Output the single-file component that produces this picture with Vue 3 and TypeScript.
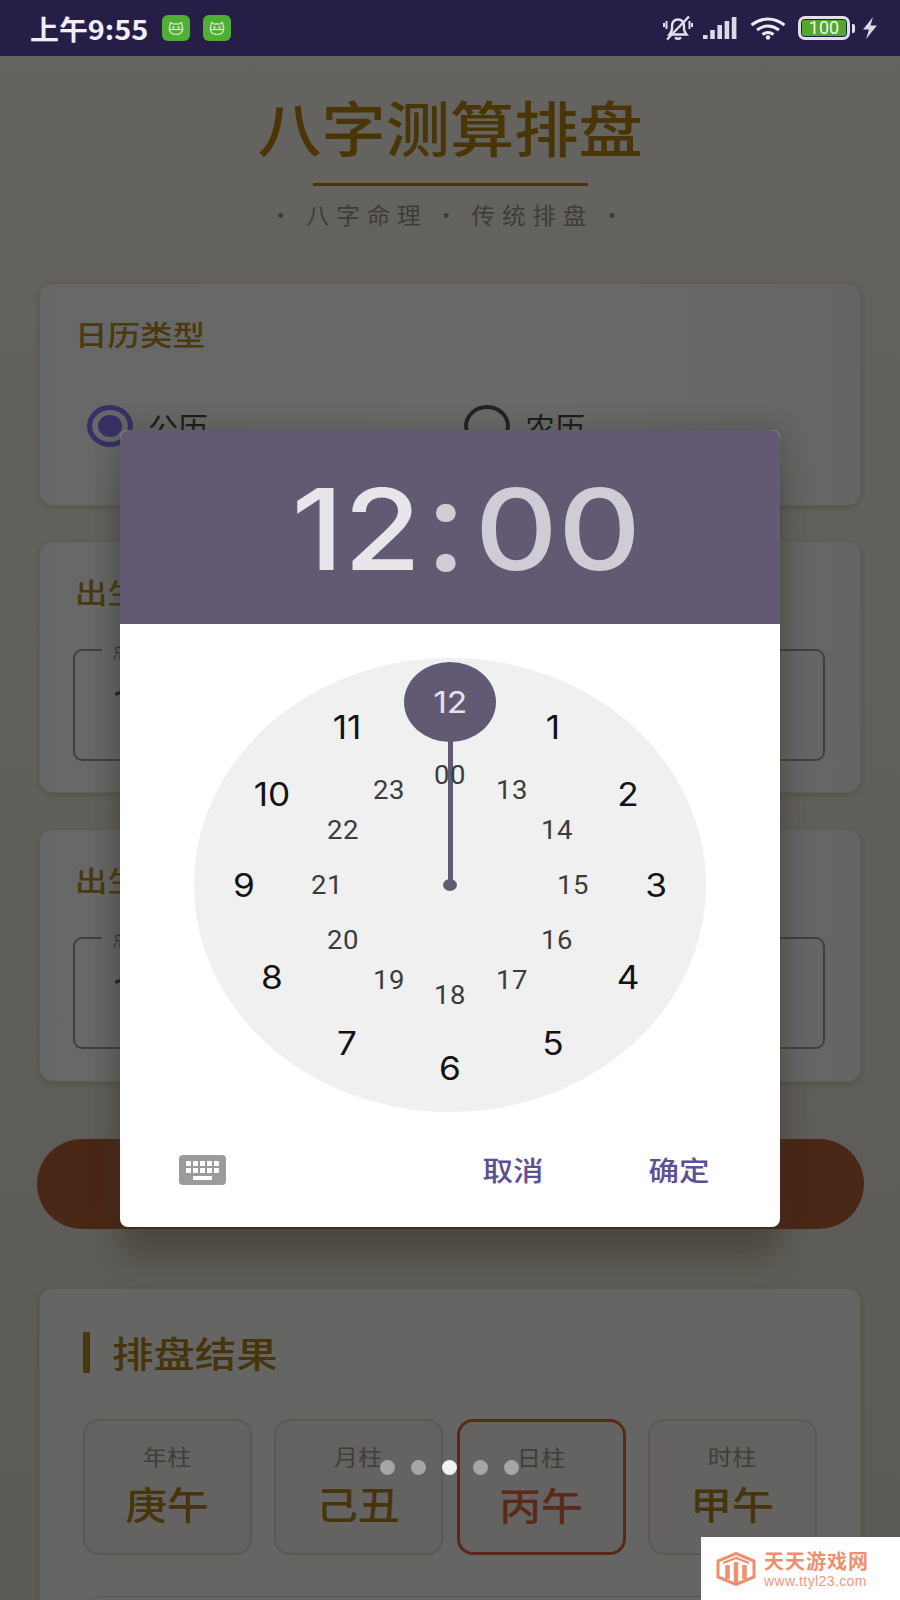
<script setup lang="ts">
interface Mark { label: string; x: number; y: number }

const place = (labels: string[], rx: number, ry: number): Mark[] =>
  labels.map((label, i) => {
    const a = (i * Math.PI) / 6
    return { label, x: 256 + rx * Math.sin(a), y: 227 - ry * Math.cos(a) }
  })

const outer = place(['', '1', '2', '3', '4', '5', '6', '7', '8', '9', '10', '11'], 206, 183).slice(1)
const inner = place(['00', '13', '14', '15', '16', '17', '18', '19', '20', '21', '22', '23'], 123, 110)

const pillars = [
  { label: '年柱', value: '庚午', active: false },
  { label: '月柱', value: '己丑', active: false },
  { label: '日柱', value: '丙午', active: true },
  { label: '时柱', value: '甲午', active: false },
]
const pages = [0, 1, 2, 3, 4]
const bars = [4, 9, 14, 18, 22]
</script>

<template>
  <div class="phone">
    <header class="status">
      <span class="clock-text"><span>上午9:55</span></span>
      <span v-for="n in 2" :key="n" class="app-badge">
        <svg width="18" height="15" viewBox="0 0 18 15" fill="none" stroke="#d8f0cc" stroke-width="1.2">
          <path d="M3 5 L3.5 1.5 L6.5 3.2 Q9 2.6 11.5 3.2 L14.5 1.5 L15 5 Q17 9 14 12 Q9 15 4 12 Q1 9 3 5Z" />
          <path d="M2.5 8.5 H15.5" />
          <circle cx="6.5" cy="6.4" r=".6" />
          <circle cx="11.5" cy="6.4" r=".6" />
        </svg>
      </span>
      <span class="status-spacer"></span>
      <svg class="ico-bell" width="30" height="26" viewBox="0 0 30 26" fill="none" stroke="#e4e0ee" stroke-width="2.400">
        <path d="M6.500 19.500 Q9.500 16 9 11 Q9.500 4.500 15 4.500 Q20.500 4.500 21 11 Q20.500 16 23.500 19.500 Z" />
        <path d="M12 22.500 Q15 25 18 22.500" />
        <path d="M3.500 6 V14 M1 8 V12 M26.500 6 V14 M29 8 V12" stroke-width="2" />
        <path d="M4 24.500 L26 1.500" />
      </svg>
      <svg class="ico-signal" width="34" height="22" viewBox="0 0 34 22">
        <rect v-for="(h, i) in bars" :key="i" :x="i * 7.200" :y="22 - h" width="4.600" :height="h" fill="#dcd8e6" />
      </svg>
      <svg class="ico-wifi" width="36" height="23" viewBox="0 0 36 23" fill="none" stroke="#ece9f2" stroke-width="3">
        <path d="M1.500 8 Q18 -4 34.500 8" />
        <path d="M7 13 Q18 5 29 13" />
        <path d="M12.500 17.500 Q18 13.500 23.500 17.500" />
        <circle cx="18" cy="20.500" r="2.200" fill="#ece9f2" stroke="none" />
      </svg>
      <span class="battery"><span class="battery-fill">100</span></span>
      <span class="battery-nub"></span>
      <svg class="ico-bolt" width="16" height="22" viewBox="0 0 16 22">
        <path d="M11 0 L1 12.500 H7 L4 22 L15 8.500 H8.500 Z" fill="#dcd8e6" />
      </svg>
    </header>

    <main class="page">
      <section class="hero">
        <h1 class="hero-title"><span>八字测算排盘</span></h1>
        <div class="hero-rule"></div>
        <p class="hero-sub"><span>· 八字命理 · 传统排盘 ·</span></p>
      </section>

      <section class="card card-calendar">
        <h2 class="card-title"><span>日历类型</span></h2>
        <div class="radios">
          <div class="radio">
            <span class="radio-mark on"><i></i></span>
            <span class="radio-text">公历</span>
          </div>
          <div class="radio">
            <span class="radio-mark"></span>
            <span class="radio-text">农历</span>
          </div>
        </div>
      </section>

      <section class="card card-field">
        <h2 class="card-title"><span>出生日期</span></h2>
        <div class="field">
          <span class="field-label">点击选择日期</span>
          <span class="field-value">1990-01-15</span>
        </div>
      </section>

      <section class="card card-field card-third">
        <h2 class="card-title"><span>出生时间</span></h2>
        <div class="field">
          <span class="field-label">点击选择时间</span>
          <span class="field-value">12:00</span>
        </div>
      </section>

      <div class="submit"></div>

      <section class="card card-result">
        <h2 class="result-title"><span>排盘结果</span></h2>
        <div class="pillars">
          <div v-for="p in pillars" :key="p.label" class="pillar" :class="{ active: p.active }">
            <span class="pillar-label">{{ p.label }}</span>
            <span class="pillar-value">{{ p.value }}</span>
          </div>
        </div>
        <div class="result-next"></div>
      </section>
    </main>

    <div class="dialog">
      <div class="dialog-head">
        <span class="time-h">12</span>
        <span class="time-c">:</span>
        <span class="time-m">00</span>
      </div>
      <div class="dial-wrap">
        <div class="dial">
          <div class="hand"></div>
          <div class="hub"></div>
          <div class="selector"><span>12</span></div>
          <span
            v-for="m in outer"
            :key="'o' + m.label"
            class="num num-outer"
            :style="{ left: m.x + 'px', top: m.y + 'px' }"
          >{{ m.label }}</span>
          <span
            v-for="m in inner"
            :key="'i' + m.label"
            class="num num-inner"
            :style="{ left: m.x + 'px', top: m.y + 'px' }"
          >{{ m.label }}</span>
        </div>
      </div>
      <div class="dialog-foot">
        <svg width="47" height="30" viewBox="0 0 47 30">
          <rect width="47" height="30" rx="4" fill="#9b9b9d" />
          <g fill="#fff">
            <rect v-for="i in 5" :key="'a' + i" :x="7 + (i - 1) * 7" y="6" width="5" height="5" />
            <rect v-for="i in 5" :key="'b' + i" :x="7 + (i - 1) * 7" y="13" width="5" height="5" />
            <rect x="14" y="21" width="19" height="4" />
          </g>
        </svg>
        <span class="foot-spacer"></span>
        <span class="foot-btn cancel">取消</span>
        <span class="foot-btn">确定</span>
      </div>
    </div>

    <div class="dots">
      <span v-for="p in pages" :key="p" class="dot" :class="{ current: p === 2 }"></span>
    </div>

    <div class="mark">
      <svg width="40" height="34" viewBox="0 0 40 34" fill="none" stroke="#ee8f70" stroke-width="3">
        <path d="M20 1.500 L38 9 V25 L20 32.500 L2 25 V9 Z" />
        <path d="M7 11 L20 6 L33 11" stroke-width="2.400" />
        <path d="M11.500 13 V27 M20 10 V31 M28.500 13 V27" stroke-width="4.500" />
      </svg>
      <div class="mark-text">
        <span class="mark-name">天天游戏网</span>
        <span class="mark-url">www.ttyl23.com</span>
      </div>
    </div>
  </div>
</template>

<style>
html, body { margin: 0; background: #5c5a55; }
</style>

<style scoped>
.phone {
  position: relative;
  width: 900px;
  height: 1600px;
  overflow: hidden;
  background: linear-gradient(#656460, #5c5a55);
  font-family: "Noto Sans CJK SC", sans-serif;
}

/* status bar */
.status {
  height: 56px;
  background: #271e48;
  display: flex;
  align-items: center;
  padding: 0 22px 0 30px;
  box-sizing: border-box;
}
.clock-text {
  width: 132px;
  font-size: 27px;
  font-weight: 700;
  color: #f1eef6;
  white-space: nowrap;
}
.clock-text span { display: inline-block; transform: scaleX(1.07); transform-origin: left center; }
.app-badge {
  width: 28px;
  height: 26px;
  margin-right: 13px;
  border-radius: 6px;
  background: #50ae36;
  display: flex;
  align-items: center;
  justify-content: center;
}
.status-spacer { flex: 1; }
.ico-bell { margin-right: 10px; }
.ico-signal { margin-right: 13px; }
.ico-wifi { margin-right: 12px; }
.battery {
  width: 52px;
  height: 24px;
  box-sizing: border-box;
  border: 3px solid #e2dfea;
  border-radius: 7px;
  padding: 1px;
  display: flex;
}
.battery-fill {
  flex: 1;
  background: #54a62c;
  border-radius: 2px;
  color: #f2f5e8;
  font-family: Roboto, sans-serif;
  font-size: 18px;
  line-height: 16px;
  text-align: center;
}
.battery-nub {
  width: 3px;
  height: 9px;
  margin: 0 7px 0 2px;
  background: #e2dfea;
  border-radius: 0 2px 2px 0;
}

/* page */
.page {
  display: flex;
  flex-direction: column;
  align-items: stretch;
  padding: 0 39px;
}
.hero {
  height: 227px;
  padding-top: 35px;
  box-sizing: border-box;
  display: flex;
  flex-direction: column;
  align-items: center;
}
.hero-title {
  margin: 0;
  font-size: 60px;
  line-height: 70px;
  font-weight: 500;
  color: #4a3507;
  white-space: nowrap;
}
.hero-title span { display: inline-block; transform: scaleX(1.07); }
.hero-rule {
  width: 275px;
  height: 3px;
  margin-top: 22px;
  background: #4f300d;
}
.hero-sub {
  margin: 10px 0 0;
  font-size: 23px;
  line-height: 36px;
  letter-spacing: 6.500px;
  word-spacing: -5px;
  color: #3f3c36;
  white-space: pre;
}
.hero-sub span { display: inline-block; transform: scaleX(1.03); }

.card {
  box-sizing: border-box;
  border: 1px solid #605d55;
  border-radius: 14px;
  background: linear-gradient(90deg, #666766, #696968 60%, #646564);
  box-shadow: 0 2px 5px rgba(50, 45, 35, .25);
  padding: 30px 0 0 35px;
}
.card-title {
  margin: 0;
  font-size: 28px;
  line-height: 40px;
  font-weight: 500;
  color: #4a390e;
}
.card-title span { display: inline-block; transform: scaleX(1.16); transform-origin: left center; }
.card-calendar { height: 223px; }
.radios {
  display: flex;
  margin-top: 51px;
  padding-left: 12px;
}
.radio {
  width: 377px;
  display: flex;
  align-items: center;
  gap: 15px;
}
.radio-mark {
  width: 46px;
  height: 42px;
  box-sizing: border-box;
  border: 4px solid #222124;
  border-radius: 50%;
  display: flex;
  align-items: center;
  justify-content: center;
}
.radio-mark.on { border: 5px solid #382f66; }
.radio-mark i {
  width: 24px;
  height: 22px;
  border-radius: 50%;
  background: #382f66;
}
.radio-text { font-size: 30px; line-height: 40px; color: #1d1c1c; }

.card-field { height: 252px; margin-top: 35px; }
.card-third { height: 253px; margin-top: 36px; }
.field {
  position: relative;
  width: 752px;
  height: 112px;
  margin: 37px 0 0 -2px;
  box-sizing: border-box;
  border: 2px solid #3f3f42;
  border-radius: 9px;
  padding: 31px 0 0 37px;
}
.field-label {
  position: absolute;
  left: 27px;
  top: -14px;
  padding: 0 10px;
  background: #666766;
  font-size: 20px;
  line-height: 26px;
  color: #3b3b3b;
}
.field-value {
  font-family: Roboto, sans-serif;
  font-size: 38px;
  line-height: 44px;
  color: #1c1c1c;
}

.submit {
  width: 827px;
  height: 90px;
  margin: 57px 0 0 -2px;
  border-radius: 45px;
  background: #4b2717;
}

.card-result {
  height: 340px;
  margin-top: 59px;
  padding: 43px 0 0 43px;
  background: #656564;
}
.result-title {
  margin: 0;
  height: 41px;
  border-left: 7px solid #4c370a;
  padding-left: 22px;
  font-size: 36px;
  line-height: 41px;
  font-weight: 500;
  color: #46340c;
}
.result-title span { display: inline-block; transform: scaleX(1.15); transform-origin: left center; }
.pillars {
  display: flex;
  gap: 22px;
  margin-top: 46px;
}
.pillar {
  width: 169px;
  height: 136px;
  box-sizing: border-box;
  border: 2px solid #5c5954;
  border-radius: 16px;
  background: #646361;
  display: flex;
  flex-direction: column;
  align-items: center;
  padding-top: 19px;
}
.pillar:nth-child(3) { margin-left: -8px; }
.pillar.active { border: 3px solid #5a2818; }
.pillar-label {
  font-size: 22px;
  line-height: 30px;
  color: #403e3a;
  transform: scaleX(1.1);
}
.pillar-value {
  margin-top: 9px;
  font-size: 38px;
  line-height: 48px;
  font-weight: 500;
  color: #46340c;
  transform: scaleX(1.1);
}
.pillar.active .pillar-value { color: #5a2919; }
.result-next {
  height: 40px;
  margin: 41px 0 0 2px;
  border: 1px solid #595752;
  border-radius: 14px;
  width: 733px;
}

/* time dialog */
.dialog {
  position: absolute;
  left: 120px;
  top: 430px;
  width: 660px;
  height: 797px;
  border-radius: 8px;
  overflow: hidden;
  background: #fff;
  display: flex;
  flex-direction: column;
  box-shadow: 0 34px 30px -4px rgba(60, 55, 40, .5), 0 0 24px rgba(40, 38, 30, .28);
}
.dialog-head {
  height: 194px;
  box-sizing: border-box;
  background: #625a72;
  display: flex;
  align-items: center;
  padding: 4px 0 0 178px;
  font-family: Inter, sans-serif;
  font-size: 113px;
  font-weight: 500;
  line-height: 190px;
  color: #cfccd6;
}
.time-h { color: #e8e6ea; display: inline-block; transform: scaleX(1.11); }
.time-c {
  display: inline-block;
  margin-left: 14px;
  font-family: Roboto, sans-serif;
  font-size: 124px;
  font-weight: 700;
}
.time-m { display: inline-block; margin-left: 22px; transform: scaleX(1.14); }
.dial-wrap {
  padding-top: 34px;
  display: flex;
  justify-content: center;
}
.dial {
  position: relative;
  width: 512px;
  height: 454px;
  border-radius: 50%;
  background: #f0f0f1;
}
.hand {
  position: absolute;
  left: 253.500px;
  top: 80px;
  width: 5px;
  height: 147px;
  background: #625a72;
}
.hub {
  position: absolute;
  left: 249px;
  top: 221px;
  width: 14px;
  height: 12px;
  border-radius: 50%;
  background: #625a72;
}
.selector {
  position: absolute;
  left: 210px;
  top: 4px;
  width: 92px;
  height: 80px;
  border-radius: 50%;
  background: #625a72;
  display: flex;
  align-items: center;
  justify-content: center;
  color: #e6e2ee;
  font-family: Inter, sans-serif;
  font-size: 30px;
}
.selector span { display: inline-block; transform: scaleX(1.12); }
.num {
  position: absolute;
  transform: translate(-50%, -50%) scaleX(1.1);
  white-space: nowrap;
}
.num-outer {
  font-family: Inter, sans-serif;
  font-size: 32px;
  color: #131313;
}
.num-inner {
  font-family: Roboto, sans-serif;
  font-size: 25px;
  color: #3c3c3c;
  letter-spacing: .5px;
}
.dialog-foot {
  flex: 1;
  display: flex;
  align-items: center;
  padding: 0 74px 0 59px;
}
.foot-spacer { flex: 1; }
.foot-btn {
  font-size: 27px;
  font-weight: 500;
  color: #5d4f94;
  transform: scaleX(1.13);
}
.cancel { margin-right: 112px; }

/* pager */
.dots {
  position: absolute;
  left: 380px;
  top: 1460px;
  display: flex;
  gap: 16px;
}
.dot {
  width: 15px;
  height: 15px;
  border-radius: 50%;
  background: #a6a6a4;
}
.dot.current { background: #f2f2f0; }

/* watermark */
.mark {
  position: absolute;
  left: 701px;
  top: 1537px;
  width: 199px;
  height: 63px;
  background: #fff;
  display: flex;
  align-items: center;
  gap: 8px;
  padding-left: 15px;
  box-sizing: border-box;
}
.mark-text { display: flex; flex-direction: column; }
.mark-name {
  font-size: 20px;
  line-height: 24px;
  font-weight: 700;
  color: #ee8f70;
  letter-spacing: 1px;
}
.mark-url {
  font-family: "Liberation Sans", sans-serif;
  font-size: 14px;
  line-height: 16px;
  color: #ee9a80;
  letter-spacing: .4px;
}
</style>
